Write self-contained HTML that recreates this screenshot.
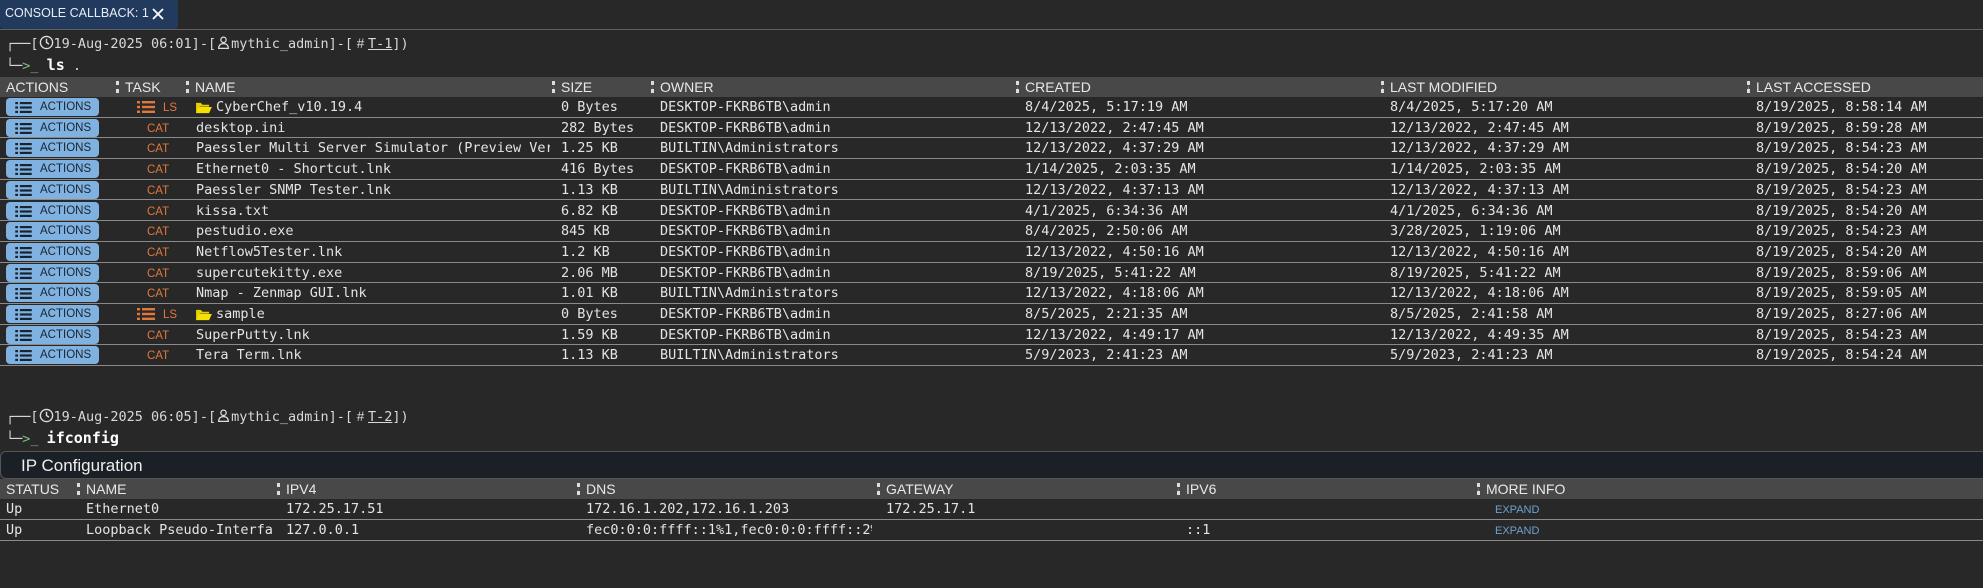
<!DOCTYPE html>
<html><head><meta charset="utf-8"><style>
*{box-sizing:border-box;margin:0;padding:0}
body{width:1983px;height:588px;background:#282828;color:#e0e0e0;font-family:"Liberation Sans",sans-serif;position:relative;overflow:hidden}
.abs{position:absolute;white-space:nowrap}
.mono{font-family:"DejaVu Sans Mono","Liberation Mono",monospace}
.tab{left:0;top:0;width:178px;height:29px;background:#223a5e;border-radius:0 0 4px 4px;font-size:12.5px;color:#e8eef5;padding:6px 0 0 5px}
.hdr{position:absolute;left:0;width:1983px;height:20px;background:#484848;font-size:14px;color:#e8e8e8;white-space:nowrap}
.hdr span{position:absolute;top:2px}
.sep{position:absolute;top:4px;width:3px;height:12px;border-left:3px dotted #ddd}
.row{position:absolute;left:0;width:1983px;height:20.7px;border-bottom:1px solid #8a8a8a;font-size:13.5px;font-family:"DejaVu Sans Mono","Liberation Mono",monospace;color:#e4e4e4;white-space:nowrap}
.row span{position:absolute;top:2px;overflow:hidden;white-space:nowrap}
.btn{position:absolute;left:6px;top:1px;width:93px;height:18px;background:#7fb2e0;border-radius:4px;font-family:"Liberation Sans",sans-serif;font-size:11.5px;color:#1a2430;padding:3px 0 0 34px}
.ico{position:absolute;left:9px;top:4px}
.row .task{font-family:"Liberation Sans",sans-serif;font-size:11.5px;color:#e0783c;top:5px}
.prompt{font-size:13.5px;color:#d8d8d8}
.row .exp{left:1495px;top:5px;font-family:"Liberation Sans",sans-serif;font-size:11px;color:#6fa0d0}
</style></head><body>
<div class="abs tab">CONSOLE CALLBACK: 1<svg width="14" height="14" viewBox="0 0 14 14" style="position:absolute;left:151px;top:7px"><path d="M2 2L12 12M12 2L2 12" stroke="#fff" stroke-width="1.8"/></svg></div>
<div class="abs" style="left:0;top:29px;width:1983px;border-top:1px solid #606060"></div>

<div class="abs mono prompt" style="left:6px;top:35px">┌──[<svg width="15" height="15" viewBox="0 0 14 14" style="vertical-align:-2px"><circle cx="7" cy="7" r="5.7" fill="none" stroke="#ddd" stroke-width="1.3"/><path d="M7 3.5V7l2.3 1.5" fill="none" stroke="#ddd" stroke-width="1.3"/></svg>19-Aug-2025 06:01]-[<svg width="15" height="15" viewBox="0 0 14 14" style="vertical-align:-2px"><circle cx="7" cy="4.5" r="2.5" fill="none" stroke="#ddd" stroke-width="1.2"/><path d="M2.5 12.5c0-3 2-4.5 4.5-4.5s4.5 1.5 4.5 4.5z" fill="none" stroke="#ddd" stroke-width="1.2"/></svg>mythic_admin]-[<span style="font-family:'Liberation Sans'"> # </span><u>T-1</u>])</div>
<div class="abs mono prompt" style="left:6px;top:56px">└─<span style="color:#7ec07e">&gt;_</span> <b style="font-size:15px;color:#fff">ls</b> .</div>

<div class="hdr" style="top:77px">
<span style="left:6px">ACTIONS</span><i class="sep" style="left:116px"></i><span style="left:125px">TASK</span><i class="sep" style="left:186px"></i><span style="left:195px">NAME</span><i class="sep" style="left:552px"></i><span style="left:561px">SIZE</span><i class="sep" style="left:651px"></i><span style="left:660px">OWNER</span><i class="sep" style="left:1016px"></i><span style="left:1025px">CREATED</span><i class="sep" style="left:1381px"></i><span style="left:1390px">LAST MODIFIED</span><i class="sep" style="left:1747px"></i><span style="left:1756px">LAST ACCESSED</span>
</div>

<svg width="0" height="0" style="position:absolute"><defs>
<symbol id="li" viewBox="0 0 18 12"><rect x="0" y="0" width="3" height="2.4"/><rect x="5" y="0" width="13" height="2.4"/><rect x="0" y="4.8" width="3" height="2.4"/><rect x="5" y="4.8" width="13" height="2.4"/><rect x="0" y="9.6" width="3" height="2.4"/><rect x="5" y="9.6" width="13" height="2.4"/></symbol>
<symbol id="fo" viewBox="0 0 18 14"><path d="M1 2h5l2 2h7v2H5L2 13H1z" fill="#e8d000"/><path d="M4.5 6.5H18L15 13H1.5z" fill="#f4e100"/></symbol>
</defs></svg>

<div class="row" style="top:97px"><div class="btn"><svg class="ico" width="17" height="11" fill="#1a2430"><use href="#li"/></svg>ACTIONS</div><svg style="position:absolute;left:137px;top:4px" width="18" height="12" fill="#e0783c"><use href="#li"/></svg><span class="task" style="left:163px">LS</span><svg style="position:absolute;left:195px;top:4px" width="17" height="13"><use href="#fo"/></svg><span style="left:216px;width:334px">CyberChef_v10.19.4</span><span style="left:561px">0 Bytes</span><span style="left:660px">DESKTOP-FKRB6TB\admin</span><span style="left:1025px">8/4/2025, 5:17:19 AM</span><span style="left:1390px">8/4/2025, 5:17:20 AM</span><span style="left:1756px">8/19/2025, 8:58:14 AM</span></div>

<div class="row" style="top:117.7px"><div class="btn"><svg class="ico" width="17" height="11" fill="#1a2430"><use href="#li"/></svg>ACTIONS</div><span class="task" style="left:147px">CAT</span><span style="left:196px;width:354px">desktop.ini</span><span style="left:561px">282 Bytes</span><span style="left:660px">DESKTOP-FKRB6TB\admin</span><span style="left:1025px">12/13/2022, 2:47:45 AM</span><span style="left:1390px">12/13/2022, 2:47:45 AM</span><span style="left:1756px">8/19/2025, 8:59:28 AM</span></div>

<div class="row" style="top:138.4px"><div class="btn"><svg class="ico" width="17" height="11" fill="#1a2430"><use href="#li"/></svg>ACTIONS</div><span class="task" style="left:147px">CAT</span><span style="left:196px;width:354px">Paessler Multi Server Simulator (Preview Version)</span><span style="left:561px">1.25 KB</span><span style="left:660px">BUILTIN\Administrators</span><span style="left:1025px">12/13/2022, 4:37:29 AM</span><span style="left:1390px">12/13/2022, 4:37:29 AM</span><span style="left:1756px">8/19/2025, 8:54:23 AM</span></div>

<div class="row" style="top:159.1px"><div class="btn"><svg class="ico" width="17" height="11" fill="#1a2430"><use href="#li"/></svg>ACTIONS</div><span class="task" style="left:147px">CAT</span><span style="left:196px;width:354px">Ethernet0 - Shortcut.lnk</span><span style="left:561px">416 Bytes</span><span style="left:660px">DESKTOP-FKRB6TB\admin</span><span style="left:1025px">1/14/2025, 2:03:35 AM</span><span style="left:1390px">1/14/2025, 2:03:35 AM</span><span style="left:1756px">8/19/2025, 8:54:20 AM</span></div>

<div class="row" style="top:179.8px"><div class="btn"><svg class="ico" width="17" height="11" fill="#1a2430"><use href="#li"/></svg>ACTIONS</div><span class="task" style="left:147px">CAT</span><span style="left:196px;width:354px">Paessler SNMP Tester.lnk</span><span style="left:561px">1.13 KB</span><span style="left:660px">BUILTIN\Administrators</span><span style="left:1025px">12/13/2022, 4:37:13 AM</span><span style="left:1390px">12/13/2022, 4:37:13 AM</span><span style="left:1756px">8/19/2025, 8:54:23 AM</span></div>

<div class="row" style="top:200.5px"><div class="btn"><svg class="ico" width="17" height="11" fill="#1a2430"><use href="#li"/></svg>ACTIONS</div><span class="task" style="left:147px">CAT</span><span style="left:196px;width:354px">kissa.txt</span><span style="left:561px">6.82 KB</span><span style="left:660px">DESKTOP-FKRB6TB\admin</span><span style="left:1025px">4/1/2025, 6:34:36 AM</span><span style="left:1390px">4/1/2025, 6:34:36 AM</span><span style="left:1756px">8/19/2025, 8:54:20 AM</span></div>

<div class="row" style="top:221.2px"><div class="btn"><svg class="ico" width="17" height="11" fill="#1a2430"><use href="#li"/></svg>ACTIONS</div><span class="task" style="left:147px">CAT</span><span style="left:196px;width:354px">pestudio.exe</span><span style="left:561px">845 KB</span><span style="left:660px">DESKTOP-FKRB6TB\admin</span><span style="left:1025px">8/4/2025, 2:50:06 AM</span><span style="left:1390px">3/28/2025, 1:19:06 AM</span><span style="left:1756px">8/19/2025, 8:54:23 AM</span></div>

<div class="row" style="top:241.9px"><div class="btn"><svg class="ico" width="17" height="11" fill="#1a2430"><use href="#li"/></svg>ACTIONS</div><span class="task" style="left:147px">CAT</span><span style="left:196px;width:354px">Netflow5Tester.lnk</span><span style="left:561px">1.2 KB</span><span style="left:660px">DESKTOP-FKRB6TB\admin</span><span style="left:1025px">12/13/2022, 4:50:16 AM</span><span style="left:1390px">12/13/2022, 4:50:16 AM</span><span style="left:1756px">8/19/2025, 8:54:20 AM</span></div>

<div class="row" style="top:262.6px"><div class="btn"><svg class="ico" width="17" height="11" fill="#1a2430"><use href="#li"/></svg>ACTIONS</div><span class="task" style="left:147px">CAT</span><span style="left:196px;width:354px">supercutekitty.exe</span><span style="left:561px">2.06 MB</span><span style="left:660px">DESKTOP-FKRB6TB\admin</span><span style="left:1025px">8/19/2025, 5:41:22 AM</span><span style="left:1390px">8/19/2025, 5:41:22 AM</span><span style="left:1756px">8/19/2025, 8:59:06 AM</span></div>

<div class="row" style="top:283.3px"><div class="btn"><svg class="ico" width="17" height="11" fill="#1a2430"><use href="#li"/></svg>ACTIONS</div><span class="task" style="left:147px">CAT</span><span style="left:196px;width:354px">Nmap - Zenmap GUI.lnk</span><span style="left:561px">1.01 KB</span><span style="left:660px">BUILTIN\Administrators</span><span style="left:1025px">12/13/2022, 4:18:06 AM</span><span style="left:1390px">12/13/2022, 4:18:06 AM</span><span style="left:1756px">8/19/2025, 8:59:05 AM</span></div>

<div class="row" style="top:304px"><div class="btn"><svg class="ico" width="17" height="11" fill="#1a2430"><use href="#li"/></svg>ACTIONS</div><svg style="position:absolute;left:137px;top:4px" width="18" height="12" fill="#e0783c"><use href="#li"/></svg><span class="task" style="left:163px">LS</span><svg style="position:absolute;left:195px;top:4px" width="17" height="13"><use href="#fo"/></svg><span style="left:216px;width:334px">sample</span><span style="left:561px">0 Bytes</span><span style="left:660px">DESKTOP-FKRB6TB\admin</span><span style="left:1025px">8/5/2025, 2:21:35 AM</span><span style="left:1390px">8/5/2025, 2:41:58 AM</span><span style="left:1756px">8/19/2025, 8:27:06 AM</span></div>

<div class="row" style="top:324.7px"><div class="btn"><svg class="ico" width="17" height="11" fill="#1a2430"><use href="#li"/></svg>ACTIONS</div><span class="task" style="left:147px">CAT</span><span style="left:196px;width:354px">SuperPutty.lnk</span><span style="left:561px">1.59 KB</span><span style="left:660px">DESKTOP-FKRB6TB\admin</span><span style="left:1025px">12/13/2022, 4:49:17 AM</span><span style="left:1390px">12/13/2022, 4:49:35 AM</span><span style="left:1756px">8/19/2025, 8:54:23 AM</span></div>

<div class="row" style="top:345.4px"><div class="btn"><svg class="ico" width="17" height="11" fill="#1a2430"><use href="#li"/></svg>ACTIONS</div><span class="task" style="left:147px">CAT</span><span style="left:196px;width:354px">Tera Term.lnk</span><span style="left:561px">1.13 KB</span><span style="left:660px">BUILTIN\Administrators</span><span style="left:1025px">5/9/2023, 2:41:23 AM</span><span style="left:1390px">5/9/2023, 2:41:23 AM</span><span style="left:1756px">8/19/2025, 8:54:24 AM</span></div>

<div class="abs mono prompt" style="left:6px;top:408px">┌──[<svg width="15" height="15" viewBox="0 0 14 14" style="vertical-align:-2px"><circle cx="7" cy="7" r="5.7" fill="none" stroke="#ddd" stroke-width="1.3"/><path d="M7 3.5V7l2.3 1.5" fill="none" stroke="#ddd" stroke-width="1.3"/></svg>19-Aug-2025 06:05]-[<svg width="15" height="15" viewBox="0 0 14 14" style="vertical-align:-2px"><circle cx="7" cy="4.5" r="2.5" fill="none" stroke="#ddd" stroke-width="1.2"/><path d="M2.5 12.5c0-3 2-4.5 4.5-4.5s4.5 1.5 4.5 4.5z" fill="none" stroke="#ddd" stroke-width="1.2"/></svg>mythic_admin]-[<span style="font-family:'Liberation Sans'"> # </span><u>T-2</u>])</div>
<div class="abs mono prompt" style="left:6px;top:429px">└─<span style="color:#7ec07e">&gt;_</span> <b style="font-size:15px;color:#fff">ifconfig</b></div>

<div class="abs" style="left:0;top:451px;width:1983px;height:28px;background:#1b2027;border:1px solid #555;border-right:none;border-radius:6px 0 0 6px;font-size:17px;color:#eee;padding:4px 0 0 20px">IP Configuration</div>

<div class="hdr" style="top:479px">
<span style="left:6px">STATUS</span><i class="sep" style="left:77px"></i><span style="left:86px">NAME</span><i class="sep" style="left:277px"></i><span style="left:286px">IPV4</span><i class="sep" style="left:577px"></i><span style="left:586px">DNS</span><i class="sep" style="left:877px"></i><span style="left:886px">GATEWAY</span><i class="sep" style="left:1177px"></i><span style="left:1186px">IPV6</span><i class="sep" style="left:1477px"></i><span style="left:1486px">MORE INFO</span>
</div>
<div class="row" style="top:499px"><span style="left:6px">Up</span><span style="left:86px;width:186px">Ethernet0</span><span style="left:286px">172.25.17.51</span><span style="left:586px;width:286px">172.16.1.202,172.16.1.203</span><span style="left:886px">172.25.17.1</span><span class="exp">EXPAND</span></div>
<div class="row" style="top:520px"><span style="left:6px">Up</span><span style="left:86px;width:186px">Loopback Pseudo-Interface 1</span><span style="left:286px">127.0.0.1</span><span style="left:586px;width:286px">fec0:0:0:ffff::1%1,fec0:0:0:ffff::2%1</span><span style="left:1186px">::1</span><span class="exp">EXPAND</span></div>
</body></html>
